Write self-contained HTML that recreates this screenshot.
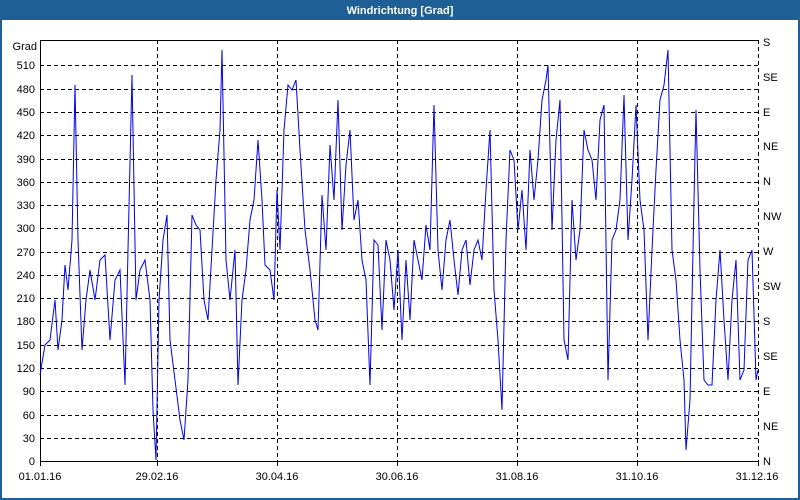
<!DOCTYPE html>
<html><head><meta charset="utf-8"><style>
html,body{margin:0;padding:0;width:800px;height:500px;overflow:hidden;background:#fff}
svg{display:block}
text{font-family:"Liberation Sans",sans-serif;font-size:11px;fill:#000}
</style></head><body>
<svg width="800" height="500" viewBox="0 0 800 500">
<rect x="0" y="0" width="800" height="500" fill="#1e5f96"/>
<rect x="2" y="20" width="796" height="478" fill="#fff"/>
<text x="400" y="14" text-anchor="middle" style="fill:#fff;font-weight:bold;font-size:11px">Windrichtung [Grad]</text>
<g stroke="#000" stroke-width="1" stroke-dasharray="4,3" fill="none">
<path d="M40 438.5H758M40 415.5H758M40 391.5H758M40 368.5H758M40 345.5H758M40 321.5H758M40 298.5H758M40 275.5H758M40 252.5H758M40 228.5H758M40 205.5H758M40 182.5H758M40 159.5H758M40 135.5H758M40 112.5H758M40 89.5H758M40 65.5H758"/>
<path d="M157.5 40V461M277.5 40V461M397.5 40V461M517.5 40V461M637.5 40V461M758.5 40V461"/>
</g>
<path d="M40.5 40V461.5H758M40 40.5H758" stroke="#000" fill="none"/>
<path d="M40.5 461V466M157.5 461V466M277.5 461V466M397.5 461V466M517.5 461V466M637.5 461V466M758.5 461V466" stroke="#000"/>
<polyline fill="none" stroke="#0000ee" stroke-width="1" points="40,375 45,345 50,340 55,300 58,350 62,320 65,265 68,290 72,240 75,85 78,240 82,350 86,300 90,270 95,300 100,260 105,255 110,340 115,280 120,270 125,385 128,250 132,75 136,300 140,270 145,260 150,300 153,410 156,460 159,300 163,240 167,215 170,340 175,380 180,420 184,440 188,380 192,215 196,225 200,230 204,300 208,320 212,250 216,180 220,130 222,50 226,260 230,300 235,250 238,385 242,300 246,270 250,220 254,200 258,140 262,200 265,265 270,270 274,300 277,190 280,250 284,130 288,85 292,90 296,80 300,150 305,230 310,270 315,320 318,330 322,195 326,250 330,145 334,200 338,100 342,230 346,165 350,130 354,220 358,200 362,260 366,280 370,385 374,240 378,245 382,330 386,240 390,260 394,310 398,250 402,340 406,260 410,320 414,240 418,260 422,280 426,225 430,250 434,105 438,250 442,290 446,240 450,220 454,260 458,295 462,250 466,240 470,285 474,250 478,240 482,260 486,190 490,130 494,290 498,340 502,410 506,240 510,150 514,160 518,230 522,190 526,250 530,150 534,200 538,160 542,100 546,80 548,65 552,230 556,140 560,100 564,340 568,360 572,200 576,260 580,230 584,130 588,150 592,160 596,200 600,120 604,105 608,380 612,240 616,230 620,200 624,95 628,240 632,180 636,105 640,200 644,230 648,340 652,250 656,170 660,100 664,85 668,50 672,250 676,280 680,340 684,380 686,450 690,400 694,200 696,110 700,270 704,380 708,385 712,385 716,300 720,250 724,320 728,380 732,300 736,260 740,380 744,370 748,260 752,250 756,380 758,370"/>
<g text-anchor="end">
<text x="37" y="50">Grad</text>
<text x="35" y="69">510</text><text x="35" y="93">480</text><text x="35" y="116">450</text><text x="35" y="139">420</text><text x="35" y="163">390</text><text x="35" y="186">360</text><text x="35" y="209">330</text><text x="35" y="232">300</text><text x="35" y="256">270</text><text x="35" y="279">240</text><text x="35" y="302">210</text><text x="35" y="325">180</text><text x="35" y="349">150</text><text x="35" y="372">120</text><text x="35" y="395">90</text><text x="35" y="419">60</text><text x="35" y="442">30</text><text x="35" y="465">0</text>
</g>
<g>
<text x="763" y="46">S</text><text x="763" y="81">SE</text><text x="763" y="116">E</text><text x="763" y="150">NE</text><text x="763" y="185">N</text><text x="763" y="220">NW</text><text x="763" y="255">W</text><text x="763" y="290">SW</text><text x="763" y="325">S</text><text x="763" y="360">SE</text><text x="763" y="395">E</text><text x="763" y="430">NE</text><text x="763" y="465">N</text>
</g>
<g text-anchor="middle">
<text x="40" y="480">01.01.16</text><text x="157" y="480">29.02.16</text><text x="277" y="480">30.04.16</text><text x="397" y="480">30.06.16</text><text x="517" y="480">31.08.16</text><text x="637" y="480">31.10.16</text><text x="757" y="480">31.12.16</text>
</g>
</svg>
</body></html>
